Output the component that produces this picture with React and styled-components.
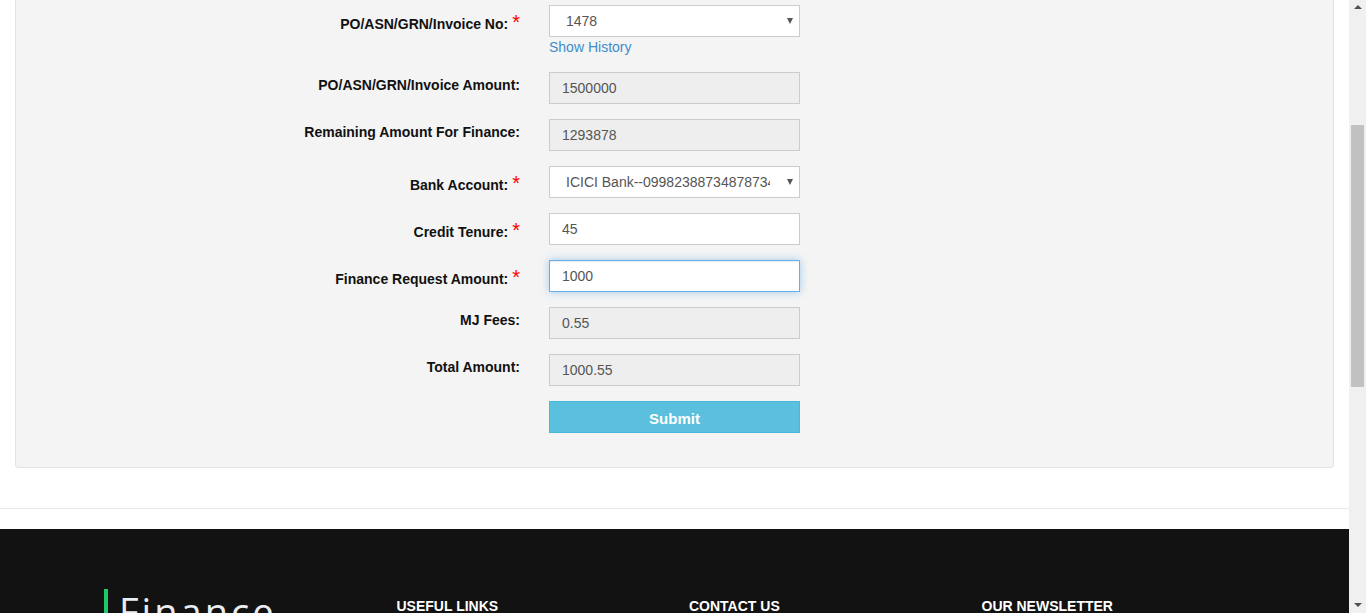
import React from "react";
import styled, { createGlobalStyle, css } from "styled-components";

const GlobalStyle = createGlobalStyle`
  html, body {
    margin: 0;
    padding: 0;
    overflow: hidden;
    background: #fff;
  }
  body {
    font-family: "Liberation Sans", Arial, sans-serif;
    font-size: 14px;
    color: #333;
  }
  * {
    box-sizing: border-box;
  }
`;

const Page = styled.div`
  display: flex;
  height: 613px;
  overflow: hidden;
`;

const Main = styled.div`
  flex: 1;
  display: flex;
  flex-direction: column;
  min-width: 0;
`;

const FormArea = styled.div`
  padding: 0 15px;
`;

const Panel = styled.div`
  background: #f4f4f4;
  border: 1px solid #e3e3e3;
  border-top: none;
  border-radius: 0 0 4px 4px;
  padding: 5px 0 34px;
`;

const Row = styled.div`
  display: grid;
  grid-template-columns: 504px 251px;
  column-gap: 29px;
  margin-bottom: 15px;
  &:last-child {
    margin-bottom: 0;
  }
`;

const Label = styled.label`
  text-align: right;
  font-size: 14px;
  line-height: 20px;
  font-weight: bold;
  color: #111;
  padding-top: ${({ $required }) => ($required ? "9px" : "3px")};
`;

const Star = styled.span`
  color: #ff0000;
  font-size: 20px;
  margin-left: 4px;
  font-weight: normal;
  line-height: 0;
`;

const Control = styled.div`
  display: flex;
  flex-direction: column;
`;

const fieldBase = css`
  width: 251px;
  height: 32px;
  border: 1px solid #ccc;
  border-radius: 0;
  font-family: "Liberation Sans", Arial, sans-serif;
  font-size: 14px;
  color: #555;
  outline: none;
`;

const TextInput = styled.input`
  ${fieldBase}
  padding: 0 12px;
  background: ${({ readOnly }) => (readOnly ? "#eee" : "#fff")};
  ${({ $focused }) =>
    $focused &&
    css`
      border-color: #66afe9;
      box-shadow: inset 0 1px 1px rgba(0, 0, 0, 0.075),
        0 0 8px rgba(102, 175, 233, 0.6);
    `}
`;

const SelectWrap = styled.div`
  position: relative;
  width: 251px;
`;

const Select = styled.select`
  ${fieldBase}
  appearance: none;
  background: #fff;
  padding: 0 29px 0 16px;
  white-space: nowrap;
  overflow: hidden;
`;

const Arrow = styled.span`
  position: absolute;
  right: 7px;
  top: 13px;
  width: 0;
  height: 0;
  border-left: 3.5px solid transparent;
  border-right: 3.5px solid transparent;
  border-top: 6px solid #555;
  pointer-events: none;
`;

const HistoryLink = styled.a`
  color: #3c8dcc;
  font-size: 14px;
  line-height: 20px;
  text-decoration: none;
`;

const SubmitButton = styled.button`
  width: 251px;
  height: 32px;
  border: 1px solid #46b8da;
  background: #5bc0de;
  color: #fff;
  font-family: "Liberation Sans", Arial, sans-serif;
  font-size: 15px;
  font-weight: bold;
  border-radius: 0;
  padding: 2px 0 0;
`;

const Spacer = styled.div`
  height: ${({ $h }) => $h}px;
  flex-shrink: 0;
`;

const Divider = styled.hr`
  margin: 0;
  border: none;
  border-top: 1px solid #e8e8e8;
`;

const Footer = styled.footer`
  flex: 1;
  background: #121212;
  padding: 60px 0 0 104px;
  display: grid;
  grid-template-columns: repeat(4, 292.5px);
  align-items: start;
`;

const Logo = styled.div`
  border-left: 4px solid #1ec96a;
  padding-left: 11px;
  font-family: "Open Sans", "Noto Sans", sans-serif;
  font-size: 38px;
  line-height: 44px;
  letter-spacing: 3px;
  color: #e9edf2;
  white-space: nowrap;
`;

const FooterHeading = styled.h4`
  margin: 7px 0 0;
  font-family: "Liberation Sans", Arial, sans-serif;
  font-size: 14px;
  font-weight: bold;
  letter-spacing: 0;
  color: #fff;
  line-height: 20px;
`;

const Scrollbar = styled.div`
  width: 17px;
  background: #f0f0f0;
  display: flex;
  flex-direction: column;
  align-items: center;
  justify-content: space-between;
  padding: 5px 0 6px;
`;

const ScrollArrow = styled.span`
  width: 0;
  height: 0;
  border-left: 4px solid transparent;
  border-right: 4px solid transparent;
  ${({ $down }) =>
    $down
      ? css`border-top: 4px solid #505050;`
      : css`border-bottom: 4px solid #505050;`}
`;

const Track = styled.div`
  flex: 1;
  width: 100%;
  padding: 116px 2px 216px;
  display: flex;
`;

const Thumb = styled.div`
  flex: 1;
  background: #c1c1c1;
`;

const fields = [
  { label: "PO/ASN/GRN/Invoice Amount:", value: "1500000", readOnly: true },
  { label: "Remaining Amount For Finance:", value: "1293878", readOnly: true },
];

const Field = ({ label, required, children }) => (
  <Row>
    <Label $required={required}>
      {label}
      {required && <Star>*</Star>}
    </Label>
    <Control>{children}</Control>
  </Row>
);

const Dropdown = ({ value }) => (
  <SelectWrap>
    <Select defaultValue={value}>
      <option value={value}>{value}</option>
    </Select>
    <Arrow />
  </SelectWrap>
);

export default function App() {
  return (
    <Page>
      <GlobalStyle />
      <Main>
        <FormArea>
          <Panel>
            <Field label="PO/ASN/GRN/Invoice No:" required>
              <Dropdown value="1478" />
              <HistoryLink href="#">Show History</HistoryLink>
            </Field>
            {fields.map((f) => (
              <Field key={f.label} label={f.label}>
                <TextInput readOnly defaultValue={f.value} />
              </Field>
            ))}
            <Field label="Bank Account:" required>
              <Dropdown value="ICICI Bank--0998238873487873456" />
            </Field>
            <Field label="Credit Tenure:" required>
              <TextInput defaultValue="45" />
            </Field>
            <Field label="Finance Request Amount:" required>
              <TextInput $focused defaultValue="1000" />
            </Field>
            <Field label="MJ Fees:">
              <TextInput readOnly defaultValue="0.55" />
            </Field>
            <Field label="Total Amount:">
              <TextInput readOnly defaultValue="1000.55" />
            </Field>
            <Row>
              <span />
              <SubmitButton type="button">Submit</SubmitButton>
            </Row>
          </Panel>
        </FormArea>
        <Spacer $h={40} />
        <Divider />
        <Spacer $h={20} />
        <Footer>
          <Logo>Finance</Logo>
          <FooterHeading>USEFUL LINKS</FooterHeading>
          <FooterHeading>CONTACT US</FooterHeading>
          <FooterHeading>OUR NEWSLETTER</FooterHeading>
        </Footer>
      </Main>
      <Scrollbar>
        <ScrollArrow />
        <Track>
          <Thumb />
        </Track>
        <ScrollArrow $down />
      </Scrollbar>
    </Page>
  );
}
